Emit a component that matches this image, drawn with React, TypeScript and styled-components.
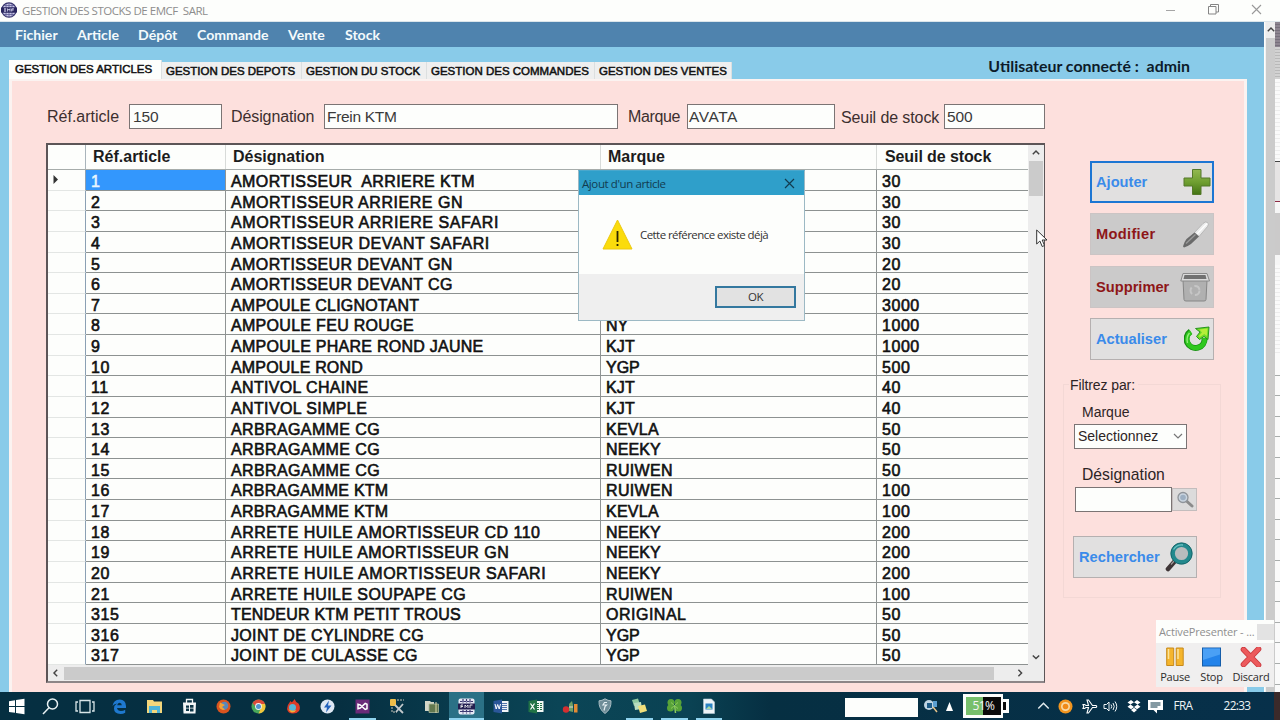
import React from "react";
import styled, { createGlobalStyle } from "styled-components";

const Global = createGlobalStyle`
  * { box-sizing: border-box; }
  body { margin: 0; background: #fdfefc; overflow: hidden; }
`;

const arial = `"Liberation Sans", Arial, sans-serif`;
const segoe = `"Open Sans", "Noto Sans", sans-serif`;

const Screen = styled.div`
  position: relative;
  width: 1280px;
  height: 720px;
  display: flex;
  flex-direction: column;
  overflow: hidden;
  font-family: ${arial};
  color: #151515;
  white-space: pre;
`;

/* ---------- window chrome ---------- */
const TitleBar = styled.header`
  height: 22px;
  flex: none;
  display: flex;
  align-items: center;
  padding: 0 18px 2px 1px;
  background: #fdfefc;
  border-bottom: 1px solid #dbe5ea;
`;
const TitleText = styled.span`
  margin-left: 5px;
  padding-top: 2px;
  flex: 1;
  font: 11.5px ${segoe};
  letter-spacing: -0.47px;
  color: #8d8d8d;
`;
const WindowControls = styled.div`
  display: flex;
  gap: 32px;
  align-items: center;
`;
const Desktop = styled.div`
  flex: 1;
  min-height: 0;
  display: flex;
`;
const AppWindow = styled.main`
  width: 1264px;
  display: flex;
  flex-direction: column;
  background: #89cbe9;
`;
const MenuBar = styled.nav`
  height: 25px;
  flex: none;
  display: flex;
  align-items: center;
  background: #4f83ae;
  padding-left: 15px;
`;
const MenuItem = styled.span<{ $w: number }>`
  width: ${(p) => p.$w}px;
  font: 700 14.1px Lato, "Open Sans", sans-serif;
  color: #f4fafc;
`;
const TabRow = styled.div`
  height: 32px;
  flex: none;
  display: flex;
  align-items: flex-end;
  padding-left: 9px;
`;
const Tab = styled.div<{ $w: number; $active?: boolean; $ls?: number }>`
  width: ${(p) => p.$w}px;
  height: ${(p) => (p.$active ? 19 : 17)}px;
  line-height: ${(p) => (p.$active ? 18 : 18)}px;
  padding-left: ${(p) => (p.$active ? 6 : 4)}px;
  background: ${(p) => (p.$active ? "#fdfefc" : "#efefef")};
  border-right: 1px solid #dcdfe0;
  font-size: 11.5px;
  letter-spacing: ${(p) => p.$ls ?? 0}px;
  -webkit-text-stroke: 0.5px #111;
  color: #111;
`;
const UserLabel = styled.span`
  margin-left: auto;
  margin-right: 74px;
  align-self: flex-start;
  padding-top: 10px;
  font: 700 15.9px/18px Lato, "Open Sans", sans-serif;
  color: #0d1b2a;
`;
const Pane = styled.section`
  flex: 1;
  min-height: 0;
  margin: 0 17px 0 9px;
  border: solid #fbf3f1;
  border-width: 2px 3px 0 3px;
  background: #fde0dd;
  display: flex;
  padding-left: 34px;
`;
const Left = styled.div`
  width: 999px;
  display: flex;
  flex-direction: column;
  padding-top: 23px;
`;
const Fields = styled.div`
  display: flex;
  align-items: center;
  height: 25px;
  margin-bottom: 14px;
  font-size: 16px;
  color: #3c2f2f;
`;
const FieldLabel = styled.label<{ $w: number; $ls?: number; $pl?: number; $drop?: number }>`
  width: ${(p) => p.$w}px;
  padding-left: ${(p) => p.$pl ?? 0}px;
  padding-top: ${(p) => p.$drop ?? 0}px;
  letter-spacing: ${(p) => p.$ls ?? 0}px;
`;
const FieldBox = styled.div<{ $w: number; $ls?: number; $pl?: number }>`
  width: ${(p) => p.$w}px;
  height: 25px;
  line-height: 24px;
  padding-left: ${(p) => p.$pl ?? 2}px;
  font-size: 15.5px;
  background: #fdfefc;
  border: 1px solid #7b7474;
  color: #3a3a3a;
  letter-spacing: ${(p) => p.$ls ?? -0.1}px;
`;

/* ---------- data grid ---------- */
const GridFrame = styled.div`
  height: 540px;
  border: 2px solid #5c5557;
  border-right-width: 1px;
  border-bottom-color: #8d8688;
  background: #fdfefc;
  display: flex;
  flex-direction: column;
`;
const GridTop = styled.div`
  height: 521px;
  display: flex;
`;
const GridRows = styled.div`
  width: 980px;
  display: flex;
  flex-direction: column;
`;
const cols = "38px 140px 375px 276px 151px";
const HeadRow = styled.div`
  display: grid;
  grid-template-columns: ${cols};
  height: 25px;
  font-size: 16px;
  font-weight: 700;
  line-height: 24px;
  border-bottom: 1px solid #a6acaa;
  color: #1c1c1c;
`;
const HeadCell = styled.div`
  padding-left: 7px;
  border-right: 1px solid #d8dbd9;
  &:first-child { border-color: #a9b4bb; }
  &:last-child { border: 0; padding-left: 8px; letter-spacing: -0.1px; }
`;
const Row = styled.div`
  display: grid;
  grid-template-columns: ${cols};
  height: 20.63px;
  font-size: 16px;
  line-height: 23px;
  color: #111;
  -webkit-text-stroke: 0.6px currentColor;
`;
const Cell = styled.div<{ $selected?: boolean; $ls?: number }>`
  padding-left: 5px;
  height: 20.63px;
  overflow: hidden;
  border-right: 1px solid #8f9494;
  border-bottom: 1px solid #8d9291;
  letter-spacing: ${(p) => p.$ls ?? 0.55}px;
  background: ${(p) => (p.$selected ? "#3397fd" : "transparent")};
  color: ${(p) => (p.$selected ? "#e9f5ff" : "#111")};
  &:last-child { border-right: 0; }
`;
const RowHead = styled.div`
  height: 20.63px;
  border-right: 1px solid #8ba0b4;
  border-bottom: 1px solid #e3e6e4;
  display: flex;
  align-items: center;
  padding-left: 5px;
`;
const VScroll = styled.div`
  width: 16px;
  background: #ededed;
  display: flex;
  flex-direction: column;
  align-items: center;
`;
const VThumb = styled.div`
  width: 14px;
  height: 35px;
  background: #cbcbcb;
`;
const ScrollBtn = styled.div`
  width: 16px;
  height: 16px;
  display: flex;
  align-items: center;
  justify-content: center;
`;
const Spacer = styled.div`
  flex: 1;
`;
const HScroll = styled.div`
  flex: 1;
  background: #ededed;
  display: flex;
  align-items: center;
`;
const HThumb = styled.div`
  width: 930px;
  height: 13px;
  background: #cbcbcb;
`;

/* ---------- side panel ---------- */
const Side = styled.aside`
  padding: 80px 0 0 18px;
  display: flex;
  flex-direction: column;
`;
const Actions = styled.div`
  display: flex;
  flex-direction: column;
  gap: 10.3px;
  margin-left: 27px;
`;
const Button = styled.button<{ $tone: "blue" | "red"; $focus?: boolean; $ls?: number }>`
  width: 124px;
  height: 42px;
  padding: ${(p) => (p.$focus ? "0 1px 0 4px" : "0 3px 0 5px")};
  display: flex;
  align-items: center;
  justify-content: space-between;
  background: ${(p) => (p.$tone === "red" ? "#cbcaca" : "#e1e0e0")};
  border: ${(p) => (p.$focus ? "2px solid #1c76d3" : p.$tone === "red" ? "1px solid #cbc4c4" : "1px solid #b5b0b0")};
  font: 700 14.67px ${arial};
  letter-spacing: ${(p) => p.$ls ?? 0}px;
  color: ${(p) => (p.$tone === "red" ? "#8e1618" : "#3a8bea")};
`;
const FilterGroup = styled.fieldset`
  width: 158px;
  height: 223px;
  margin: 15px 0 0;
  padding: 0 0 0 10px;
  border: 1px solid #f3d8d5;
  min-width: 0;
  color: #2d2425;
`;
const Legend = styled.legend`
  margin-left: -5px;
  padding: 0 3px 0 1px;
  font-size: 14px;
  line-height: 20px;
  letter-spacing: -0.1px;
`;
const FilterLabel = styled.div<{ $size: number; $mt: number }>`
  margin: ${(p) => p.$mt}px 0 0 8px;
  font-size: ${(p) => p.$size}px;
  line-height: 18px;
`;
const Combo = styled.div`
  width: 113px;
  height: 25px;
  margin-top: 3px;
  padding: 0 3px 0 3px;
  display: flex;
  align-items: center;
  justify-content: space-between;
  border: 1px solid #7b7474;
  background: #fdfefc;
  font-size: 14px;
`;
const SearchLine = styled.div`
  display: flex;
  align-items: center;
  margin: 3px 0 24px 1px;
`;
const SearchBox = styled.div`
  width: 97px;
  height: 25px;
  border: 1px solid #7b7474;
  background: #fdfefc;
`;
const SearchBtn = styled.button`
  width: 25px;
  height: 23px;
  padding: 0;
  border: 1px solid #c3bdbd;
  background: #dcdbdb;
  display: flex;
  align-items: center;
  justify-content: center;
`;
const FilterAction = styled.div`
  margin-left: -1px;
`;

/* ---------- outer strip ---------- */
const OuterScroll = styled.div`
  width: 10px;
  margin-left: 1px;
  background: #cbcbcb;
  border-left: 1px solid #f2f2f2;
`;
const OuterBtn = styled.div`
  height: 16px;
  background: #ededed;
  display: flex;
  align-items: center;
  justify-content: flex-end;
`;
const Sliver = styled.div`
  flex: 1;
  background: #fafafa;
`;
const SliverBand = styled.div<{ $h: number; $c: string }>`
  height: ${(p) => p.$h}px;
  background: ${(p) => p.$c};
`;

/* ---------- dialog ---------- */
const Dialog = styled.div`
  position: absolute;
  left: 578px;
  top: 170px;
  width: 227px;
  height: 151px;
  border: 1px solid #9cb9c4;
  border-top-color: #4aa8cd;
  background: #fdfefc;
  display: flex;
  flex-direction: column;
  font-family: ${segoe};
`;
const DialogTitle = styled.div`
  height: 24px;
  display: flex;
  align-items: center;
  justify-content: space-between;
  padding: 0 9px 0 3px;
  background: #2f9fca;
  font-size: 11.5px;
  letter-spacing: -0.4px;
  color: #123c50;
`;
const DialogBody = styled.div`
  height: 79px;
  display: flex;
  align-items: center;
  padding: 0 0 0 23px;
  gap: 7px;
  font-size: 11.5px;
  letter-spacing: -0.56px;
  color: #333;
`;
const DialogFooter = styled.div`
  flex: 1;
  background: #efefef;
  display: flex;
  justify-content: flex-end;
  padding: 12px 8px 0 0;
`;
const OkButton = styled.button`
  width: 81px;
  height: 22px;
  padding: 0;
  border: 2px solid #34789f;
  background: #e2e2e2;
  font: 11.5px/18px ${segoe};
  letter-spacing: -0.4px;
  color: #333;
`;
const Pointer = styled.div`
  position: absolute;
  left: 1036px;
  top: 229px;
  line-height: 0;
`;

/* ---------- recorder ---------- */
const Recorder = styled.div`
  position: absolute;
  left: 1156px;
  top: 620px;
  width: 118px;
  height: 67px;
  background: #f0efef;
  font-family: ${segoe};
`;
const RecorderTitle = styled.div`
  height: 23px;
  background: #fdfefc;
  display: flex;
  align-items: center;
  padding-left: 3px;
  font-size: 11px;
  letter-spacing: -0.15px;
  color: #8f8f8f;
`;
const RecorderClose = styled.div`
  margin-left: auto;
  width: 17px;
  height: 16px;
  background: #e3e3e3;
`;
const RecorderItems = styled.div`
  display: flex;
  padding-top: 4px;
`;
const RecorderItem = styled.div<{ $w: number; $ls?: number }>`
  width: ${(p) => p.$w}px;
  display: flex;
  flex-direction: column;
  align-items: center;
  font-size: 11px;
  line-height: 18px;
  letter-spacing: ${(p) => p.$ls ?? -0.25}px;
  color: #2c2c2c;
`;
const RecorderIcon = styled.div`
  height: 21px;
  line-height: 0;
`;

/* ---------- taskbar ---------- */
const TaskBar = styled.footer`
  height: 28px;
  flex: none;
  display: flex;
  background: linear-gradient(90deg, #052f41 0, #062f41 340px, #0b4556 560px, #0a4253 690px, #062f42 770px, #07304a 100%);
  color: #eef4f6;
  font-family: ${segoe};
`;
const Apps = styled.div`
  display: flex;
  flex: none;
  margin-left: -1.3px;
  width: 846.3px;
`;
const AppSlot = styled.div<{ $active?: boolean; $open?: boolean }>`
  width: 34.65px;
  height: 28px;
  display: flex;
  align-items: center;
  justify-content: center;
  background: ${(p) => (p.$active ? "#2b7186" : "transparent")};
  box-shadow: ${(p) => (p.$active ? "inset 0 -2px #8fd3ee" : "none")};
  position: relative;
  &::after {
    content: "";
    position: absolute;
    left: 4px;
    right: 4px;
    bottom: 0;
    height: 2px;
    background: ${(p) => (p.$open ? "#8fd3ee" : "transparent")};
  }
`;
const AddressBox = styled.div`
  width: 73px;
  flex: none;
  height: 19px;
  margin-top: 6px;
  background: #fdfefc;
`;
const TrayItem = styled.div<{ $w: number }>`
  width: ${(p) => p.$w}px;
  flex: none;
  display: flex;
  align-items: center;
  justify-content: center;
`;
const TrayText = styled.div<{ $w: number }>`
  width: ${(p) => p.$w}px;
  flex: none;
  text-align: center;
  font-size: 11.8px;
  line-height: 26px;
  letter-spacing: -0.65px;
`;
const Battery = styled.div`
  width: 40px;
  flex: none;
  height: 24px;
  margin: 2px 0 0 8px;
  border: 3px solid #fdfefc;
  border-right-width: 2px;
  background: linear-gradient(90deg, #78bf6c 0 48%, #0a0a0a 48%);
  font: 12px/17px ${segoe};
  letter-spacing: -0.6px;
  text-align: center;
  color: #f5f5f5;
`;
const BatteryTip = styled.div`
  width: 6px;
  flex: none;
  height: 14px;
  margin-top: 7px;
  border: 3px solid #fdfefc;
  border-left: 0;
  background: #0a0a0a;
`;
const TaskEdge = styled.div`
  flex: 1;
  background: #3b2a2a;
`;

type ArticleRow = [ref: string, name: string, brand: string, threshold: string, tracking: number];
const rows: ArticleRow[] = [
  ["1", "AMORTISSEUR  ARRIERE KTM", "", "30", 0.4],
  ["2", "AMORTISSEUR ARRIERE GN", "", "30", 0.54],
  ["3", "AMORTISSEUR ARRIERE SAFARI", "", "30", 0.57],
  ["4", "AMORTISSEUR DEVANT SAFARI", "", "30", 0.5],
  ["5", "AMORTISSEUR DEVANT GN", "", "20", 0.4],
  ["6", "AMORTISSEUR DEVANT CG", "", "20", 0.4],
  ["7", "AMPOULE CLIGNOTANT", "", "3000", 0.2],
  ["8", "AMPOULE FEU ROUGE", "NY", "1000", 0.3],
  ["9", "AMPOULE PHARE ROND JAUNE", "KJT", "1000", 0.26],
  ["10", "AMPOULE ROND", "YGP", "500", 0.18],
  ["11", "ANTIVOL CHAINE", "KJT", "40", 0.34],
  ["12", "ANTIVOL SIMPLE", "KJT", "40", 0.37],
  ["13", "ARBRAGAMME CG", "KEVLA", "50", 0.38],
  ["14", "ARBRAGAMME CG", "NEEKY", "50", 0.38],
  ["15", "ARBRAGAMME CG", "RUIWEN", "50", 0.38],
  ["16", "ARBRAGAMME KTM", "RUIWEN", "100", 0.26],
  ["17", "ARBRAGAMME KTM", "KEVLA", "100", 0.26],
  ["18", "ARRETE HUILE AMORTISSEUR CD 110", "NEEKY", "200", 0.48],
  ["19", "ARRETE HUILE AMORTISSEUR GN", "NEEKY", "200", 0.47],
  ["20", "ARRETE HUILE AMORTISSEUR SAFARI", "NEEKY", "200", 0.54],
  ["21", "ARRETE HUILE SOUPAPE CG", "RUIWEN", "100", 0.42],
  ["315", "TENDEUR KTM PETIT TROUS", "ORIGINAL", "50", 0.2],
  ["316", "JOINT DE CYLINDRE CG", "YGP", "50", 0.33],
  ["317", "JOINT DE CULASSE CG", "YGP", "50", 0.35],
];
const brandTracking: Record<string, number> = { NEEKY: 0.1, KEVLA: 0.25, RUIWEN: 0.35, ORIGINAL: 0.5, YGP: 0, KJT: 0.2, NY: 0 };

const sliver: [number, string][] = [
  [25, "repeating-linear-gradient(#8d8590 0 2px,#77707c 2px 3px)"],
  [32, "repeating-linear-gradient(#d2d2d2 0 2px,#b9b9b9 2px 3px)"],
  [82, "repeating-linear-gradient(#fafafa 0 3px,#ececec 3px 4px)"],
  [1, "#444"],
  [39, "#e6e4e4"],
  [1, "#8e2a44"],
  [11, "#f6f6f6"],
  [42, "#cbcaca"],
  [10, "#f6f6f6"],
  [90, "repeating-linear-gradient(#fafafa 0 3px,#ececec 3px 4px)"],
];

const Chevron = ({ dir, size = 8, color = "#444", w = 1.8 }: { dir: "u" | "d" | "l" | "r"; size?: number; color?: string; w?: number }) => {
  const d = { u: "M1 6.5 5 2.5 9 6.5", d: "M1 3 5 7 9 3", l: "M6.5 1 2.5 5 6.5 9", r: "M3 1 7 5 3 9" }[dir];
  return (
    <svg width={size} height={size} viewBox="0 0 10 10" fill="none" stroke={color} strokeWidth={w}>
      <path d={d} />
    </svg>
  );
};

const Emblem = ({ s = 16 }: { s?: number }) => (
  <svg width={s} height={s} viewBox="0 0 16 16">
    <circle cx="8" cy="8" r="7.2" fill="#c9c8e6" stroke="#38356e" strokeWidth="1.3" />
    <path d="M3 3.5h10M3 12.5h10M8 1v14M5 2v12M11 2v12" stroke="#5b5893" strokeWidth=".8" />
    <rect x="0" y="5.2" width="16" height="5.6" rx="1" fill="#29265f" />
    <path d="M3 6.8h2.2M3 8h2M3 9.2h2.2M6.6 9.5V6.7l1.2 1.4L9 6.7v2.8M10.7 9.5V6.8h2.2M10.7 8h2" stroke="#e9e9ff" strokeWidth=".8" fill="none" />
  </svg>
);

const Plus = () => (
  <svg width="28" height="28" viewBox="0 0 28 28">
    <defs>
      <linearGradient id="gp" x1="0" y1="0" x2="0" y2="1">
        <stop offset="0" stopColor="#93b951" />
        <stop offset=".5" stopColor="#6f9f31" />
        <stop offset="1" stopColor="#447414" />
      </linearGradient>
    </defs>
    <path d="M9.500 1.500h8.500v8.500h9v8h-9v8.500H9.500v-8.500h-8.500v-8h8.500z" fill="url(#gp)" stroke="#55792a" strokeWidth="1" />
  </svg>
);
const Pen = () => (
  <svg width="30" height="30" viewBox="0 0 30 30">
    <path d="M14.500 13.500 23 4.500q2.500-2.500 4.500-1t0 4L19 17.500z" fill="#ececec" stroke="#a9a9a9" strokeWidth=".7" />
    <path d="M17 15 27 4.500" stroke="#fff" strokeWidth="1.200" />
    <path d="M14.500 13.500 19 17.500 11 25q-3 2-7 3.500L3 27.500q1-4.500 3.500-7.500z" fill="#6a6a6a" />
    <path d="M6 24.500 15.500 15.500" stroke="#9b9b9b" strokeWidth="1.300" fill="none" />
  </svg>
);
const Bin = () => (
  <svg width="30" height="30" viewBox="0 0 30 30">
    <path d="M3 8h24l-1 19.500q0 1.500-2 1.500H6q-2 0-2-1.500z" fill="#b0b0b0" stroke="#868686" />
    <path d="M3 1.500h24L29.500 9H.8z" fill="#dadada" stroke="#8a8a8a" />
    <path d="M4.500 3h21l1 4H3.500z" fill="#717171" />
    <circle cx="15" cy="18.500" r="4.500" fill="none" stroke="#c6c6c6" strokeWidth="2" strokeDasharray="7 3" />
  </svg>
);
const Refresh = () => (
  <svg width="26" height="26" viewBox="0 0 26 26">
    <path d="M6.500 5.500A9 9 0 1 0 20.500 12" fill="none" stroke="#178c12" strokeWidth="6" />
    <path d="M7 6A8.700 8.700 0 1 0 20.500 12" fill="none" stroke="#2fc81f" strokeWidth="4.600" />
    <path d="M11.500 2.500 25 1l-1 12.500-4-3-4.500 3-3-3 3.500-4.500z" fill="#6fdc28" stroke="#178c12" strokeWidth=".9" strokeLinejoin="round" />
    <path d="M15.500 3.500 23.500 2.500l-.7 7.500-2.500-2-4.500 3-1-1L18 6.500z" fill="#b5ee3a" />
    <path d="M5.500 7Q2 11 3.500 17" stroke="#94ee78" strokeWidth="1.400" fill="none" />
  </svg>
);
const Magnifier = () => (
  <svg width="28" height="30" viewBox="0 0 28 30">
    <path d="M10 19 3 27" stroke="#3f3536" strokeWidth="4.600" strokeLinecap="round" />
    <path d="M9.500 18.500 6 22.500" stroke="#a59c9c" strokeWidth="1.200" />
    <circle cx="16.500" cy="11.500" r="8.700" fill="#b9bcbd" stroke="#23898d" strokeWidth="4.200" />
    <circle cx="16.500" cy="11.500" r="10.700" fill="none" stroke="#0f5d62" strokeWidth=".8" />
    <path d="M8.500 7.500Q12 2.200 18 3" stroke="#6cc3c4" strokeWidth="1.300" fill="none" />
  </svg>
);
const SmallMagnifier = () => (
  <svg width="18" height="17" viewBox="0 0 18 17">
    <path d="m10.500 10 5.500 5" stroke="#8b8b8b" strokeWidth="3" strokeLinecap="round" />
    <circle cx="7" cy="6.500" r="5" fill="#c9d4df" stroke="#8f949a" strokeWidth="1.300" />
    <circle cx="7" cy="6.500" r="2.800" fill="#9dafc2" />
  </svg>
);
const Warning = () => (
  <svg width="31" height="31" viewBox="0 0 31 31">
    <path d="M15.500 1 30 30H1z" fill="#fbdc0c" stroke="#ecc90f" strokeLinejoin="round" />
    <path d="M15.500 12v11M15.500 25v2" stroke="#2b2500" strokeWidth="1.800" />
  </svg>
);

const Globe = ({ ring, mid, core }: { ring: string; mid: string; core: string }) => (
  <svg width="15" height="15" viewBox="0 0 15 15">
    <circle cx="7.500" cy="7.500" r="7" fill={ring} />
    <circle cx="7.500" cy="7.500" r="4.500" fill={mid} />
    <circle cx="7.500" cy="7.500" r="2.800" fill={core} />
  </svg>
);

const taskIcons: React.ReactNode[] = [
  <svg width="17" height="17" viewBox="0 0 17 17" fill="#fff"><path d="M1 3.200 7 2.300V8H1zM8 2.100 16.500.8V8H8zM1 9h6v5.700L1 13.900zM8 9h8.500v7.200L8 15z" /></svg>,
  <svg width="17" height="17" viewBox="0 0 17 17" fill="none" stroke="#e8f1f3" strokeWidth="1.500"><circle cx="10.500" cy="6" r="5" /><path d="M7 9.700 1 16" /></svg>,
  <svg width="20" height="15" viewBox="0 0 20 15" fill="none" stroke="#d8e5e8" strokeWidth="1.300"><path d="M5 1.500h10v12H5zM3 3H1v9h2M17 3h2v9h-2" /></svg>,
  <svg width="15" height="15" viewBox="0 0 15 15"><path d="M.5 7Q1.500.5 7.700.5q6 0 6.300 6.500v2H5q.5 3 4 3 2.200 0 4.200-1.200v3Q11.200 15 8.500 15 2 14.800 2 9.500q0-3.200 3-5Q1.500 5 .5 7zM5.200 6.300h4.600Q9.700 3.700 7.500 3.700q-2 .1-2.300 2.600z" fill="#1f79cf" fillRule="evenodd" /></svg>,
  <svg width="17" height="15" viewBox="0 0 17 15"><path d="M1 1h6l1 1.500h8V14H1z" fill="#f3d77c" /><path d="M3 7h11v7h-3v-3H6v3H3z" fill="#4db4d9" /></svg>,
  <svg width="15" height="16" viewBox="0 0 15 16"><path d="M4.500 5V1.500h6V5" fill="none" stroke="#f3f6f7" strokeWidth="1.300" /><path d="M1 4.500h13l-.5 11h-12z" fill="#f3f6f7" /><path d="M4 7.500h3v2.200H4zM8 7h3.500v2.700H8zM4 10.500h3v2.500H4zM8 10.500h3.500v3H8z" fill="#0c3546" /></svg>,
  <svg width="15" height="15" viewBox="0 0 15 15"><circle cx="7.500" cy="7.500" r="7" fill="#d9541f" /><path d="M4 5.500Q6 2 10 3q3 2 2 5.500Q9.500 12 7 10.500 4.500 9.500 4 5.500z" fill="#5889bb" /><path d="M4 3.500 9 6 6 8l3 2.500Q5 12 3 8z" fill="#f3a235" /></svg>,
  <svg width="15" height="15" viewBox="0 0 15 15"><circle cx="7.500" cy="7.500" r="7" fill="#49a85a" /><path d="M1.500 4A7 7 0 0 1 14 5H7.500L5 8z" fill="#db4a3a" /><path d="M14 5a7 7 0 0 1-6.500 9.500L10.500 8 9.500 5z" fill="#f0c63c" /><circle cx="7.500" cy="7.500" r="3.400" fill="#f3f3f3" /><circle cx="7.500" cy="7.500" r="2.500" fill="#5194cf" /></svg>,
  <svg width="15" height="16" viewBox="0 0 15 16"><path d="M4.500 3Q6 6 8.500 1q1 3 4 4.500 2.500 4 .5 7.500-2 2.500-6 2.500-5 0-6-4.500Q1 7 4.500 3z" fill="#de3c28" /><circle cx="6.500" cy="9.500" r="3.500" fill="#58b6d8" /><path d="M2.500 11q3 3 8 1-2 3-5 2.500-2-.5-3-3.500z" fill="#f4b334" /></svg>,
  <svg width="15" height="15" viewBox="0 0 15 15"><circle cx="7.500" cy="7.500" r="7" fill="#dfe8f4" /><path d="M9 1.500 4 8.500h3L6 13.500l5.500-7H8z" fill="#2463bd" /></svg>,
  <svg width="15" height="15" viewBox="0 0 15 15"><rect x=".5" y=".5" width="14" height="14" fill="#6b2a79" /><path d="M3 5.200v4.600L5.200 9l5-4.500L12 5.300v4.500L10.200 10.500 5.200 6z" fill="none" stroke="#fff" strokeWidth="1.500" /></svg>,
  <svg width="16" height="16" viewBox="0 0 16 16"><rect x="1" y="1" width="6" height="7" rx="1" fill="#eebd4a" /><path d="M8 2h7M3 9v5h5" stroke="#c7c5b8" strokeDasharray="2 1" fill="none" /><path d="m6 7 8 8M14 6 7 14" stroke="#c3c9cc" strokeWidth="1.800" /></svg>,
  <svg width="16" height="15" viewBox="0 0 16 15"><path d="M1 2h5l1 1h3v9H1z" fill="#d3d6c7" /><path d="M5 5h9.500v8.500H5z" fill="#62784f" stroke="#aab69a" strokeWidth=".8" /><path d="M12 3v11" stroke="#ddd8ac" /></svg>,
  <svg width="17" height="17" viewBox="0 0 17 17"><rect x=".5" y=".5" width="16" height="16" rx="2" fill="#e7e9f4" /><path d="M2 3.500h13M2 13.500h13M5 1v4M8.500 1v4M12 1v4M5 12v4M8.500 12v4M12 12v4" stroke="#3d3a72" strokeWidth="1.200" strokeDasharray="2.500 1" /><rect y="5.500" width="17" height="6" fill="#241f50" /><path d="M3 7v3M3 7h2M3 8.500h2M7 10V7l1.500 1.500L10 7v3M12 10V7h2.500" stroke="#eee" strokeWidth=".9" fill="none" /></svg>,
  <svg width="16" height="15" viewBox="0 0 16 15"><rect x="7" y="2" width="8.500" height="11" fill="#f2f5f8" /><path d="M9 4.500h5M9 6.500h5M9 8.500h5M9 10.500h5" stroke="#2b579a" strokeWidth=".8" /><path d="M.5 2 9 .5v14L.5 13z" fill="#2b579a" /><path d="m2 5 1.200 5L4.700 5.500 6.200 10 7.500 5" stroke="#fff" fill="none" /></svg>,
  <svg width="16" height="15" viewBox="0 0 16 15"><rect x="7" y="2" width="8.500" height="11" fill="#f2f8f4" /><path d="M9 4.500h5M9 6.500h5M9 8.500h5M9 10.500h5" stroke="#217346" strokeWidth="1.200" strokeDasharray="2 1" /><path d="M.5 2 9 .5v14L.5 13z" fill="#217346" /><path d="m2.500 4.500 4 6M6.500 4.500l-4 6" stroke="#fff" strokeWidth="1.200" /></svg>,
  <svg width="17" height="15" viewBox="0 0 17 15"><circle cx="4" cy="10.500" r="3.200" fill="#d42e30" /><path d="M7 12V5l3-3 1 4v7z" fill="#6f9f67" /><rect x="12" y="5" width="3.500" height="8.500" fill="#e58a34" /><path d="M7 8h4" stroke="#ddd" /></svg>,
  <svg width="14" height="16" viewBox="0 0 14 16"><path d="M7 .8q3 2 6 2Q13.500 11 7 15.500.5 11 1 2.800q3 0 6-2z" fill="#6f8d98" stroke="#a9bdc4" /><path d="M9 4.500H6.500L5 7h3.500L7 8.500l-1 4" stroke="#e5eef1" strokeWidth="1.200" fill="none" /></svg>,
  <svg width="17" height="16" viewBox="0 0 17 16"><path d="m1 2 6-1.500 2 6L3 8z" fill="#8fc9a0" /><path d="m3 5 7-1 1 7-7 1z" fill="#b9ddc0" /><path d="m7 8 7-1.500 2 6.500-7 2z" fill="#f0df7a" /></svg>,
  <svg width="17" height="16" viewBox="0 0 17 16" fill="#58a338"><circle cx="5" cy="4.500" r="3.500" /><circle cx="12" cy="4.500" r="3.500" /><circle cx="4.500" cy="10" r="3.500" /><circle cx="12.500" cy="10" r="3.500" /><path d="M8.500 7 9.500 15" stroke="#8cc95e" strokeWidth="1.500" /><path d="m5 4.500 7 6M12 4.500l-7 6" stroke="#8cc95e" /></svg>,
  <svg width="14" height="16" viewBox="0 0 14 16"><path d="M1.500 1h8l3 3v11.500h-11z" fill="#eef4f8" stroke="#b6cbd7" strokeWidth=".6" /><rect x="3.500" y="5.500" width="7" height="6" fill="#2b83c4" /><path d="M4 11 7 8l3 3z" fill="#a6d8a3" /></svg>,
];
const openApps = [10, 18, 19, 20];

export default function App() {
  return (
    <Screen>
      <Global />
      <TitleBar>
        <Emblem />
        <TitleText>GESTION DES STOCKS DE EMCF  SARL</TitleText>
        <WindowControls>
          <svg width="10" height="10" viewBox="0 0 10 10"><path d="M0 5.500h9" stroke="#a5a5a5" /></svg>
          <svg width="11" height="11" viewBox="0 0 11 11" fill="none" stroke="#858585"><path d="M.5 2.500h7.500v7.500H.5zM2.500 2.500V.5h8V8H8" /></svg>
          <svg width="11" height="11" viewBox="0 0 11 11" stroke="#999" strokeWidth="1.100"><path d="m1 1 9 9M10 1l-9 9" /></svg>
        </WindowControls>
      </TitleBar>

      <Desktop>
        <AppWindow>
          <MenuBar>
            <MenuItem $w={62}>Fichier</MenuItem>
            <MenuItem $w={61}>Article</MenuItem>
            <MenuItem $w={59}>Dépôt</MenuItem>
            <MenuItem $w={91}>Commande</MenuItem>
            <MenuItem $w={57}>Vente</MenuItem>
            <MenuItem $w={50}>Stock</MenuItem>
          </MenuBar>
          <TabRow>
            <Tab $w={153} $active>GESTION DES ARTICLES</Tab>
            <Tab $w={140}>GESTION DES DEPOTS</Tab>
            <Tab $w={125}>GESTION DU STOCK</Tab>
            <Tab $w={168}>GESTION DES COMMANDES</Tab>
            <Tab $w={137}>GESTION DES VENTES</Tab>
            <UserLabel>Utilisateur connecté :  admin</UserLabel>
          </TabRow>
          <Pane>
            <Left>
              <Fields>
                <FieldLabel $w={83} $pl={1}>Réf.article</FieldLabel>
                <FieldBox $w={93} $pl={3}>150</FieldBox>
                <FieldLabel $w={102} $pl={9} $ls={-0.1}>Désignation</FieldLabel>
                <FieldBox $w={294} $ls={-0.3}>Frein KTM</FieldBox>
                <FieldLabel $w={69} $pl={10} $ls={-0.35}>Marque</FieldLabel>
                <FieldBox $w={148} $ls={0.55} $pl={1}>AVATA</FieldBox>
                <FieldLabel $w={109} $pl={6} $ls={-0.1} $drop={2}>Seuil de stock</FieldLabel>
                <FieldBox $w={101}>500</FieldBox>
              </Fields>
              <GridFrame>
                <GridTop>
                  <GridRows>
                    <HeadRow>
                      <HeadCell />
                      <HeadCell>Réf.article</HeadCell>
                      <HeadCell>Désignation</HeadCell>
                      <HeadCell>Marque</HeadCell>
                      <HeadCell>Seuil de stock</HeadCell>
                    </HeadRow>
                    {rows.map(([ref, name, brand, threshold, tracking], i) => (
                      <Row key={ref}>
                        <RowHead>
                          {i === 0 && (
                            <svg width="6" height="9" viewBox="0 0 6 9"><path d="M.5 0 5 4.500.5 9z" fill="#333" /></svg>
                          )}
                        </RowHead>
                        <Cell $selected={i === 0}>{ref}</Cell>
                        <Cell $ls={tracking}>{name}</Cell>
                        <Cell $ls={brandTracking[brand]}>{brand}</Cell>
                        <Cell>{threshold}</Cell>
                      </Row>
                    ))}
                  </GridRows>
                  <VScroll>
                    <ScrollBtn><Chevron dir="u" /></ScrollBtn>
                    <VThumb />
                    <Spacer />
                    <ScrollBtn><Chevron dir="d" /></ScrollBtn>
                  </VScroll>
                </GridTop>
                <HScroll>
                  <ScrollBtn><Chevron dir="l" /></ScrollBtn>
                  <HThumb />
                  <Spacer />
                  <ScrollBtn><Chevron dir="r" /></ScrollBtn>
                  <TrayItem $w={16} />
                </HScroll>
              </GridFrame>
            </Left>
            <Side>
              <Actions>
                <Button $tone="blue" $focus>Ajouter<Plus /></Button>
                <Button $tone="red" $ls={0.3}>Modifier<Pen /></Button>
                <Button $tone="red">Supprimer<Bin /></Button>
                <Button $tone="blue">Actualiser<Refresh /></Button>
              </Actions>
              <FilterGroup>
                <Legend>Filtrez par:</Legend>
                <FilterLabel $size={14} $mt={8}>Marque</FilterLabel>
                <Combo>Selectionnez<Chevron dir="d" size={10} color="#777" w={1.2} /></Combo>
                <FilterLabel $size={15.7} $mt={17}>Désignation</FilterLabel>
                <SearchLine>
                  <SearchBox />
                  <SearchBtn><SmallMagnifier /></SearchBtn>
                </SearchLine>
                <FilterAction>
                  <Button $tone="blue">Rechercher<Magnifier /></Button>
                </FilterAction>
              </FilterGroup>
            </Side>
          </Pane>
        </AppWindow>
        <OuterScroll>
          <OuterBtn><Chevron dir="u" /></OuterBtn>
        </OuterScroll>
        <Sliver>
          {sliver.map(([h, c], i) => <SliverBand key={i} $h={h} $c={c} />)}
          <SliverBand $h={338} $c="repeating-linear-gradient(#fafafa 0 19.6px,#a9adac 19.6px 20.6px)" />
        </Sliver>
      </Desktop>

      <TaskBar>
        <Apps>
          {taskIcons.map((ic, i) => (
            <AppSlot key={i} $active={i === 13} $open={openApps.includes(i)}>{ic}</AppSlot>
          ))}
        </Apps>
        <AddressBox />
        <TrayItem $w={25}>
          <svg width="16" height="14" viewBox="0 0 16 14"><circle cx="6" cy="6" r="5" fill="#bfd4e2" /><path d="M4 4h5v5H4z" fill="#1c5a86" /><path d="M10 2h4v6h-4z" fill="#5b9fd1" /><path d="m10 8 4 5" stroke="#e8c48a" strokeWidth="1.500" /></svg>
        </TrayItem>
        <TrayItem $w={12}>
          <svg width="7" height="9" viewBox="0 0 7 9"><path d="M3.500 0 7 9H0z" fill="#fff" /></svg>
        </TrayItem>
        <Battery>51%</Battery>
        <BatteryTip />
        <TrayItem $w={41}><Spacer /><Chevron dir="u" size={13} color="#e4ecee" w={1.1} /></TrayItem>
        <TrayItem $w={31}>
          <Globe ring="#f2951f" mid="#f8d9a4" core="#f08a18" />
        </TrayItem>
        <TrayItem $w={17}>
          <svg width="16" height="15" viewBox="0 0 16 15" fill="none" stroke="#fff" strokeWidth="1.100"><path d="M1 5.500h1.500L4 6.500h2.500L5 1h1.500l4 5.500H14q1.500 1 0 2h-3.500l-4 5.500H5l1.500-5.500H4L2.500 9.500H1l.7-2z" /></svg>
        </TrayItem>
        <TrayItem $w={24}>
          <svg width="15" height="13" viewBox="0 0 15 13" fill="none" stroke="#eef4f6"><path d="M1 4.500h2.500L6 2v9L3.500 8.500H1zM8 4.500q1.500 2 0 4M10 3q2.500 3.500 0 7M12 1.500q3.500 5 0 10" /></svg>
        </TrayItem>
        <TrayItem $w={23}>
          <svg width="14" height="13" viewBox="0 0 14 13" fill="#fff"><path d="M4 0 7 2.300 3.500 4.600.5 2.500zM10 0l3.500 2.500-3 2.100L7 2.300zM.5 6.800l3-2.200L7 7 4 9.300zM13.500 6.800l-3-2.200L7 7l3 2.300zM4 10l3-2.300L10 10l-3 2.500z" /></svg>
        </TrayItem>
        <TrayItem $w={21}>
          <svg width="15" height="15" viewBox="0 0 15 15"><path d="M0 1h15v10H9v3.500L5.500 11H0z" fill="#fff" /><path d="M2.500 4h10M2.500 6h10M2.500 8h7" stroke="#0a3446" /></svg>
        </TrayItem>
        <TrayText $w={34}>FRA</TrayText>
        <TrayText $w={74}>22:33</TrayText>
        <TaskEdge />
      </TaskBar>

      <Dialog>
        <DialogTitle>
          Ajout d'un article
          <svg width="11" height="11" viewBox="0 0 11 11" stroke="#123c50" strokeWidth="1.200"><path d="m1 1 9 9M10 1l-9 9" /></svg>
        </DialogTitle>
        <DialogBody>
          <Warning />
          Cette référence existe déjà
        </DialogBody>
        <DialogFooter><OkButton>OK</OkButton></DialogFooter>
      </Dialog>

      <Pointer>
        <svg width="12" height="19" viewBox="0 0 12 19"><path d="M.7 1v14l3.200-3 2.300 5.500 2.300-1L6.200 11H11z" fill="#fff" stroke="#333" /></svg>
      </Pointer>

      <Recorder>
        <RecorderTitle>ActivePresenter - ...<RecorderClose /></RecorderTitle>
        <RecorderItems>
          <RecorderItem $w={38}>
            <RecorderIcon>
              <svg width="18" height="20" viewBox="0 0 18 20"><path d="M.7 1h7v17.500h-7zM10.200 1h7v17.500h-7z" fill="#f5b52c" stroke="#c78a1c" /><path d="M2.500 2v10M12 2v10" stroke="#fbe39a" strokeWidth="1.500" /></svg>
            </RecorderIcon>
            Pause
          </RecorderItem>
          <RecorderItem $w={35}>
            <RecorderIcon>
              <svg width="20" height="20" viewBox="0 0 20 20"><rect x=".5" y="1" width="18" height="18" fill="#2383ea" stroke="#155da9" /><path d="M1 1.500h17v6L1 13z" fill="#4aa0f5" /></svg>
            </RecorderIcon>
            Stop
          </RecorderItem>
          <RecorderItem $w={44}>
            <RecorderIcon>
              <svg width="22" height="20" viewBox="0 0 22 20"><path d="M3.500 2.500 18.500 18M18.500 2 3.500 17.500" stroke="#c9353b" strokeWidth="5.600" strokeLinecap="round" /><path d="M3.500 2.500 18.500 18M18.500 2 3.500 17.500" stroke="#ec5a5c" strokeWidth="4" strokeLinecap="round" /></svg>
            </RecorderIcon>
            Discard
          </RecorderItem>
        </RecorderItems>
      </Recorder>
    </Screen>
  );
}
